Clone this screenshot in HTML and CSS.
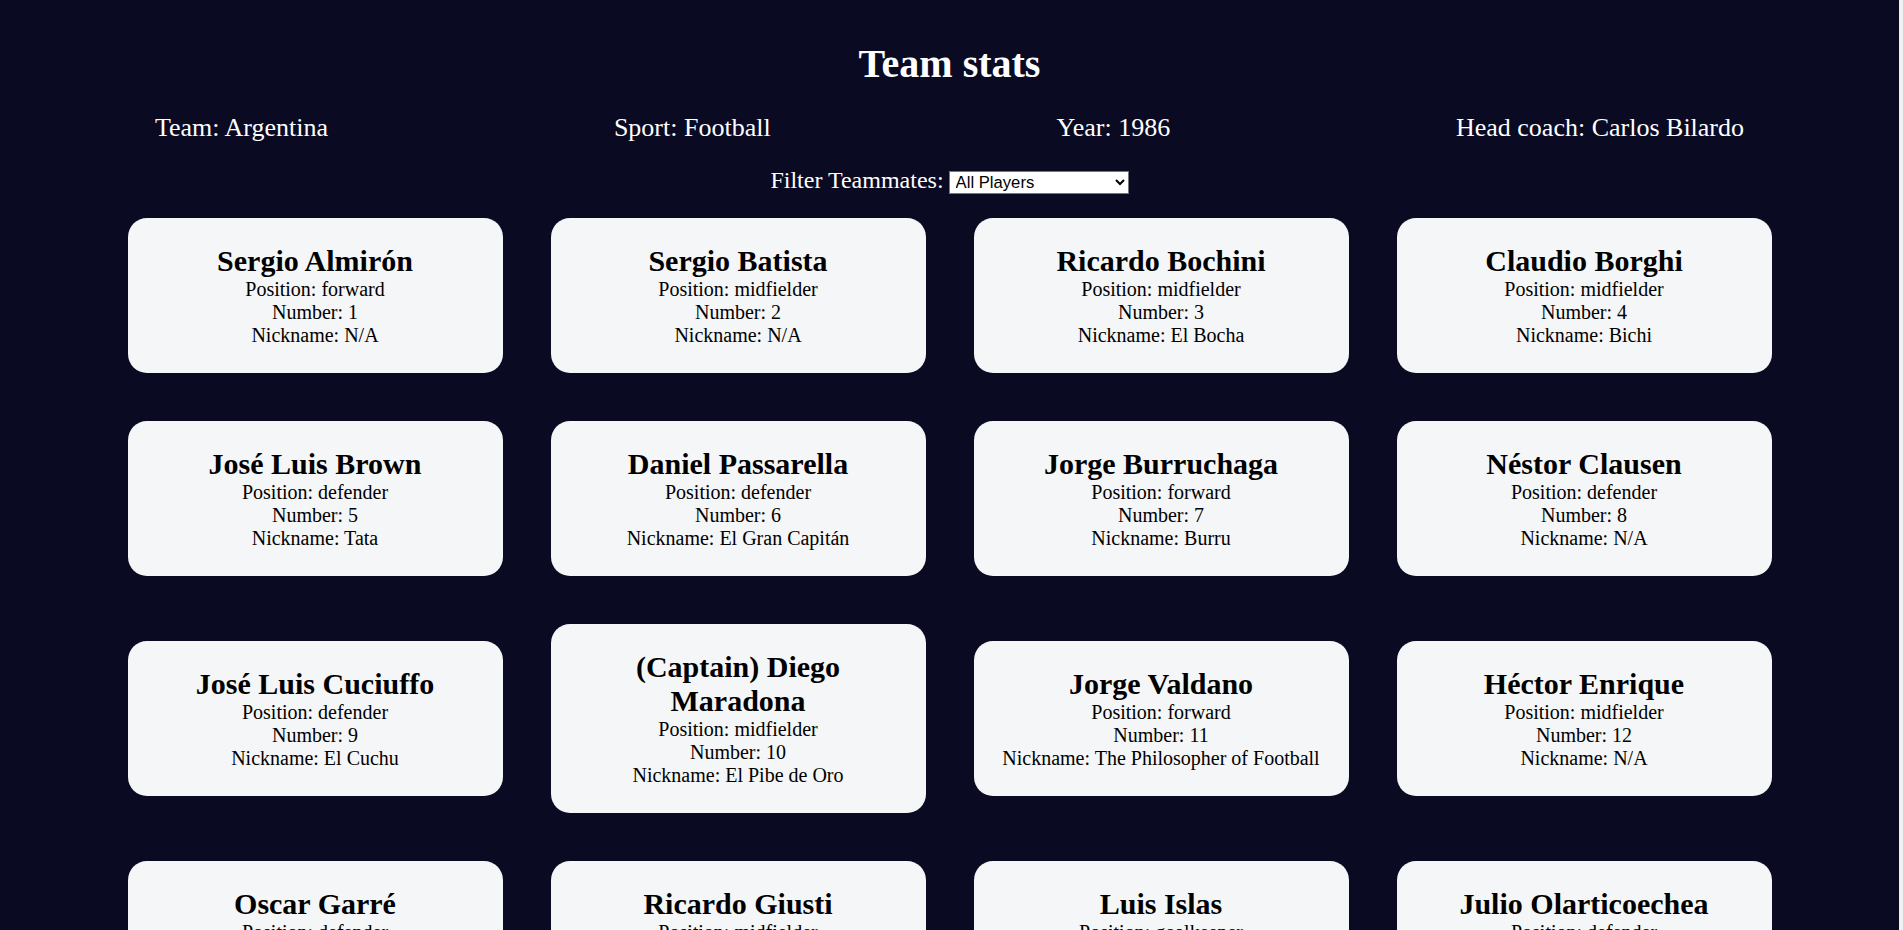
FILE: index.html
```html
<!DOCTYPE html>
<html lang="en">
<head>
<meta charset="utf-8">
<title>Team stats</title>
<link rel="stylesheet" href="styles.css">
</head>
<body>
<main class="page">
  <header class="title-container">
    <h1 class="title">Team stats</h1>
    <div class="team-stats">
      <p class="stat">Team: <span>Argentina</span></p>
      <p class="stat">Sport: <span>Football</span></p>
      <p class="stat">Year: <span>1986</span></p>
      <p class="stat">Head coach: <span>Carlos Bilardo</span></p>
    </div>
  </header>
  <label class="options-label" for="players">Filter Teammates:</label>
  <select class="players-select" name="players" id="players">
    <option value="all">All Players</option>
    <option value="nickname">Nicknames</option>
    <option value="forward">Position Forward</option>
    <option value="midfielder">Position Midfielder</option>
    <option value="defender">Position Defender</option>
    <option value="goalkeeper">Position Goalkeeper</option>
  </select>
  <section class="players">
    <div class="player-card"><h2>Sergio Almirón</h2><p>Position: forward</p><p>Number: 1</p><p>Nickname: N/A</p></div>
    <div class="player-card"><h2>Sergio Batista</h2><p>Position: midfielder</p><p>Number: 2</p><p>Nickname: N/A</p></div>
    <div class="player-card"><h2>Ricardo Bochini</h2><p>Position: midfielder</p><p>Number: 3</p><p>Nickname: El Bocha</p></div>
    <div class="player-card"><h2>Claudio Borghi</h2><p>Position: midfielder</p><p>Number: 4</p><p>Nickname: Bichi</p></div>
    <div class="player-card"><h2>José Luis Brown</h2><p>Position: defender</p><p>Number: 5</p><p>Nickname: Tata</p></div>
    <div class="player-card"><h2>Daniel Passarella</h2><p>Position: defender</p><p>Number: 6</p><p>Nickname: El Gran Capitán</p></div>
    <div class="player-card"><h2>Jorge Burruchaga</h2><p>Position: forward</p><p>Number: 7</p><p>Nickname: Burru</p></div>
    <div class="player-card"><h2>Néstor Clausen</h2><p>Position: defender</p><p>Number: 8</p><p>Nickname: N/A</p></div>
    <div class="player-card"><h2>José Luis Cuciuffo</h2><p>Position: defender</p><p>Number: 9</p><p>Nickname: El Cuchu</p></div>
    <div class="player-card"><h2>(Captain) Diego Maradona</h2><p>Position: midfielder</p><p>Number: 10</p><p>Nickname: El Pibe de Oro</p></div>
    <div class="player-card"><h2>Jorge Valdano</h2><p>Position: forward</p><p>Number: 11</p><p>Nickname: The Philosopher of Football</p></div>
    <div class="player-card"><h2>Héctor Enrique</h2><p>Position: midfielder</p><p>Number: 12</p><p>Nickname: N/A</p></div>
    <div class="player-card"><h2>Oscar Garré</h2><p>Position: defender</p><p>Number: 13</p><p>Nickname: N/A</p></div>
    <div class="player-card"><h2>Ricardo Giusti</h2><p>Position: midfielder</p><p>Number: 14</p><p>Nickname: N/A</p></div>
    <div class="player-card"><h2>Luis Islas</h2><p>Position: goalkeeper</p><p>Number: 15</p><p>Nickname: El loco</p></div>
    <div class="player-card"><h2>Julio Olarticoechea</h2><p>Position: defender</p><p>Number: 16</p><p>Nickname: N/A</p></div>
    <div class="player-card"><h2>Pedro Pasculli</h2><p>Position: forward</p><p>Number: 17</p><p>Nickname: N/A</p></div>
    <div class="player-card"><h2>Nery Pumpido</h2><p>Position: goalkeeper</p><p>Number: 18</p><p>Nickname: N/A</p></div>
    <div class="player-card"><h2>Oscar Ruggeri</h2><p>Position: defender</p><p>Number: 19</p><p>Nickname: El Cabezón</p></div>
    <div class="player-card"><h2>Carlos Tapia</h2><p>Position: midfielder</p><p>Number: 20</p><p>Nickname: N/A</p></div>
    <div class="player-card"><h2>Marcelo Trobbiani</h2><p>Position: midfielder</p><p>Number: 21</p><p>Nickname: Calesita</p></div>
    <div class="player-card"><h2>Héctor Zelada</h2><p>Position: goalkeeper</p><p>Number: 22</p><p>Nickname: N/A</p></div>
  </section>
</main>
</body>
</html>
```

FILE: styles.css
```css
*,
*::before,
*::after {
  box-sizing: border-box;
}

html {
  background: #f1f1f1;
}

body {
  margin: 0 4px 0 0;
  background-color: #0a0a23;
  font-family: "Liberation Serif", "Times New Roman", serif;
  font-size: 20px;
  text-align: center;
}

.page {
  padding: 40px 12px 24px;
}

.title-container {
  color: #ffffff;
}

.title {
  font-size: 40px;
  font-weight: bold;
  margin: 0;
}

.team-stats {
  display: flex;
  justify-content: space-around;
  flex-wrap: wrap;
  font-size: 26px;
  margin: 26px 0 24px;
}

.stat {
  margin: 0;
}

.options-label {
  color: #ffffff;
  font-size: 24px;
}

.players-select {
  font-family: "Liberation Sans", Arial, sans-serif;
  font-size: 16.67px;
  width: 180px;
  height: 23px;
  margin: 0;
  padding: 0 2px;
  color: #000;
  background: #ffffff;
  border: 1px solid #767676;
  border-radius: 0;
  vertical-align: baseline;
}

.players {
  display: grid;
  grid-template-columns: repeat(4, 375px);
  justify-content: center;
  align-items: center;
  gap: 48px;
  padding-top: 24px;
}

.player-card {
  background-color: #f5f6f7;
  color: #000;
  padding: 26px;
  border-radius: 19px;
}

.player-card h2 {
  font-size: 30px;
  margin: 0;
}

.player-card p {
  margin: 0;
}
```
